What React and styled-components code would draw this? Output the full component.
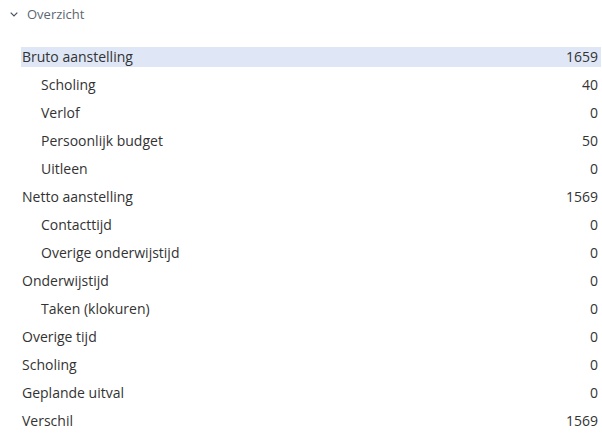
import React from "react";
import styled, { createGlobalStyle } from "styled-components";

const GlobalStyle = createGlobalStyle`
  body {
    margin: 0;
    background: #fff;
    font-family: "Open Sans", "Noto Sans", sans-serif;
  }
`;

const rows = [
  { label: "Bruto aanstelling", value: 1659, level: 0, active: true },
  { label: "Scholing", value: 40, level: 1 },
  { label: "Verlof", value: 0, level: 1 },
  { label: "Persoonlijk budget", value: 50, level: 1 },
  { label: "Uitleen", value: 0, level: 1 },
  { label: "Netto aanstelling", value: 1569, level: 0 },
  { label: "Contacttijd", value: 0, level: 1 },
  { label: "Overige onderwijstijd", value: 0, level: 1 },
  { label: "Onderwijstijd", value: 0, level: 0 },
  { label: "Taken (klokuren)", value: 0, level: 1 },
  { label: "Overige tijd", value: 0, level: 0 },
  { label: "Scholing", value: 0, level: 0 },
  { label: "Geplande uitval", value: 0, level: 0 },
  { label: "Verschil", value: 1569, level: 0 },
];

const App = () => {
  return (
    <Page>
      <GlobalStyle />
      <Header>
        <Chevron viewBox="0 0 8 5">
          <path d="M0.7 0.7 L4 4 L7.3 0.7" />
        </Chevron>
        <HeaderTitle>Overzicht</HeaderTitle>
      </Header>
      <List>
        {rows.map((row, i) => (
          <Row key={i} active={row.active}>
            <Label level={row.level}>{row.label}</Label>
            <Value>{row.value}</Value>
          </Row>
        ))}
      </List>
    </Page>
  );
};

export default App;

const Page = styled.div`
  width: 602px;
  height: 440px;
  overflow: hidden;
`;

const Header = styled.div`
  display: flex;
  align-items: center;
  height: 28px;
  padding-left: 10px;
  gap: 9px;
`;

const Chevron = styled.svg`
  width: 8px;
  height: 5px;
  fill: none;
  stroke: #4a5160;
  stroke-width: 1.2;
`;

const HeaderTitle = styled.span`
  font-size: 13px;
  color: #5d6673;
`;

const List = styled.div`
  display: flex;
  flex-direction: column;
  gap: 8px;
  margin-top: 19px;
  padding-left: 21px;
  padding-right: 1px;
`;

const Row = styled.div`
  display: flex;
  align-items: center;
  justify-content: space-between;
  height: 20px;
  padding-right: 3px;
  padding-bottom: 1px;
  box-sizing: border-box;
  background: ${(props) => (props.active ? "#dfe7f6" : "transparent")};
  font-size: 14px;
  color: #333;
`;

const Label = styled.span`
  padding-left: ${(props) => (props.level ? 20 : 1)}px;
`;

const Value = styled.span``;
